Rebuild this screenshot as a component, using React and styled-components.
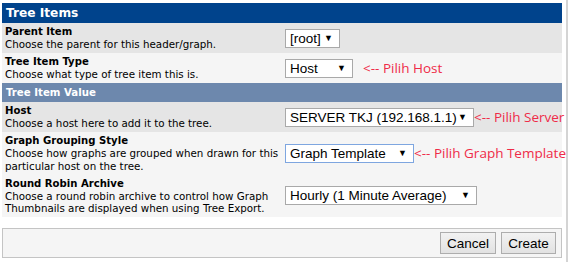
import React from "react";
import styled, { createGlobalStyle } from "styled-components";

const GlobalStyle = createGlobalStyle`
  html, body {
    margin: 0;
    padding: 0;
    background: #ffffff;
  }
  body {
    width: 569px;
    height: 262px;
    overflow: hidden;
  }
`;

const Page = styled.div`
  width: 568px;
  height: 262px;
  box-sizing: border-box;
  padding: 3px 0 0 2px;
  border-right: 2px solid #d4d4d4;
`;

const Table = styled.div`
  width: 560px;
  font-family: "DejaVu Sans", Verdana, sans-serif;
  font-size: 10.3px;
  color: #000;
`;

const Header = styled.div`
  height: 20px;
  display: flex;
  align-items: center;
  padding-left: 4px;
  background: #00438c;
  color: #fff;
  font-weight: bold;
  font-size: 12.2px;
`;

const SubHeader = styled.div`
  height: 19px;
  display: flex;
  align-items: center;
  padding-left: 4px;
  background: #6d88ad;
  color: #fff;
  font-weight: bold;
  font-size: 10.2px;
`;

const Row = styled.div`
  display: grid;
  grid-template-columns: 280px 1fr;
  align-items: center;
  height: ${(p) => p.h}px;
  padding-left: 3px;
  background: ${(p) => (p.dark ? "#e5e5e5" : "#f5f5f5")};
`;

const Label = styled.div`
  line-height: 12.5px;
`;

const Title = styled.div`
  font-weight: bold;
  font-size: 10.1px;
  line-height: 13px;
`;

const Field = styled.div`
  display: flex;
  align-items: center;
`;

const Select = styled.div`
  box-sizing: border-box;
  width: ${(p) => p.w}px;
  height: 19px;
  display: flex;
  align-items: center;
  justify-content: space-between;
  padding: 0 6px 0 4px;
  background: #fff;
  border: 1px solid ${(p) => (p.focus ? "#7ea6e0" : "#a9a9a9")};
  font-family: "Liberation Sans", Arial, sans-serif;
  font-size: 13.5px;
  white-space: nowrap;
`;

const Arrow = styled.span`
  font-size: 9px;
  line-height: 1;
`;

const Note = styled.span`
  margin-left: ${(p) => p.gap}px;
  color: #ef2b48;
  font-family: "Open Sans", sans-serif;
  font-size: 13.5px;
  white-space: nowrap;
`;

const Footer = styled.div`
  margin-top: 11px;
  height: 30px;
  box-sizing: border-box;
  border: 1px solid #c4c4c4;
  background: #f5f5f5;
  display: flex;
  align-items: center;
  justify-content: flex-end;
  gap: 5px;
  padding-right: 5px;
`;

const Button = styled.button`
  width: ${(p) => p.w}px;
  height: 22px;
  padding: 0;
  border: 1px solid #adadad;
  background: linear-gradient(#f2f2f2, #e2e2e2);
  font-family: "Liberation Sans", Arial, sans-serif;
  font-size: 13.5px;
  color: #000;
`;

const Choice = ({ w, focus, value, note, gap = 0 }) => (
  <Field>
    <Select w={w} focus={focus}>
      <span>{value}</span>
      <Arrow>▼</Arrow>
    </Select>
    {note && <Note gap={gap}>{note}</Note>}
  </Field>
);

export default function App() {
  return (
    <>
      <GlobalStyle />
      <Page>
        <Table>
          <Header>Tree Items</Header>
          <Row dark h={30}>
            <Label>
              <Title>Parent Item</Title>
              Choose the parent for this header/graph.
            </Label>
            <Choice w={55} value="[root]" />
          </Row>
          <Row h={30}>
            <Label>
              <Title>Tree Item Type</Title>
              Choose what type of tree item this is.
            </Label>
            <Choice w={68} value="Host" note="<-- Pilih Host" gap={10} />
          </Row>
          <SubHeader>Tree Item Value</SubHeader>
          <Row dark h={30}>
            <Label>
              <Title>Host</Title>
              Choose a host here to add it to the tree.
            </Label>
            <Choice w={189} value="SERVER TKJ (192.168.1.1)" note="<-- Pilih Server" />
          </Row>
          <Row h={42}>
            <Label>
              <Title>Graph Grouping Style</Title>
              Choose how graphs are grouped when drawn for this particular host on the tree.
            </Label>
            <Choice w={129} focus value="Graph Template" note="<-- Pilih Graph Template" />
          </Row>
          <Row h={43}>
            <Label>
              <Title>Round Robin Archive</Title>
              Choose a round robin archive to control how Graph Thumbnails are displayed when using Tree Export.
            </Label>
            <Choice w={192} value="Hourly (1 Minute Average)" />
          </Row>
          <Footer>
            <Button w={56}>Cancel</Button>
            <Button w={55}>Create</Button>
          </Footer>
        </Table>
      </Page>
    </>
  );
}
